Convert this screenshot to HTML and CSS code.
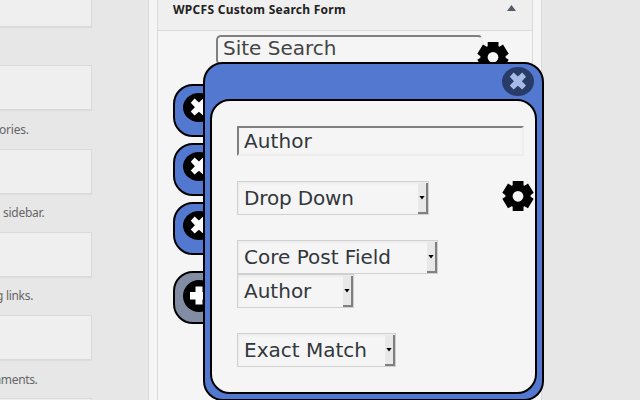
FILE: index.html
```
<!DOCTYPE html>
<html lang="en">
<head>
<meta charset="utf-8">
<title>Widgets</title>
<link rel="stylesheet" href="styles.css">
</head>
<body>
<svg width="0" height="0" class="defs">
  <symbol id="gear" viewBox="0 0 32 30">
    <path fill-rule="evenodd" d="M10.7 0H21.5V4.2L22.5 4.8L26 2.5L31.7 11.7L28.6 14.2V15.8L31.7 17.7L26 27.2L22.5 25.2L21.5 25.8V30H10.7V25.8L9.7 25.2L6 27.2L0.3 17.7L3.4 15.8V14.2L0.3 11.7L6 2.5L9.7 4.8L10.7 4.2ZM16 9.9A5.4 5.4 0 1 0 16 20.7A5.4 5.4 0 1 0 16 9.9Z"/>
  </symbol>
  <symbol id="cross" viewBox="0 0 32 29">
    <path d="M11.6 5.6L15.9 9.6L20.2 5.6L24 9.8L19.9 14.2L24 18.6L20.2 22.6L15.9 18.8L11.6 22.6L7.8 18.6L11.9 14.2L7.8 9.8Z"/>
  </symbol>
  <symbol id="plus" viewBox="0 0 32 32">
    <path d="M12.5 6.5H19.5V12H26V19.5H19.5V24.5H12.5V19.5H7V12H12.5Z"/>
  </symbol>
</svg>
<div class="page">
  <div class="available">
    <div class="box"></div><p></p>
    <div class="box"></div><p class="d1">ories.</p>
    <div class="box"></div><p class="d2">sidebar.</p>
    <div class="box"></div><p class="d3">g links.</p>
    <div class="box"></div><p class="d4">mments.</p>
    <div class="box"></div>
  </div>
  <div class="sidebar">
    <div class="widget">
      <div class="head"><h3>WPCFS Custom Search Form</h3><i class="up"></i></div>
      <div class="body">
        <div class="site">
          <div class="title">Site Search</div>
          <svg class="gear"><use href="#gear"/></svg>
        </div>
        <div class="item"><svg class="round"><use href="#cross"/></svg></div>
        <div class="item"><svg class="round"><use href="#cross"/></svg></div>
        <div class="item"><svg class="round"><use href="#cross"/></svg></div>
        <div class="item add"><svg class="round"><use href="#plus"/></svg></div>
      </div>
    </div>
  </div>
</div>
<div class="dialog">
  <div class="bar"><svg class="round close"><use href="#cross"/></svg></div>
  <div class="form">
    <div class="input">Author</div>
    <div class="row">
      <div class="select drop"><span>Drop Down</span><b></b></div>
      <svg class="gear"><use href="#gear"/></svg>
    </div>
    <div class="select core"><span>Core Post Field</span><b></b></div>
    <div class="select field"><span>Author</span><b></b></div>
    <div class="select match"><span>Exact Match</span><b></b></div>
  </div>
</div>
</body>
</html>
```
FILE: styles.css
```
* { box-sizing: border-box; }
body {
  margin: 0;
  width: 640px;
  height: 400px;
  overflow: hidden;
  position: relative;
  background: #e7e7e7;
  font-family: "DejaVu Sans", sans-serif;
}
.defs { position: absolute; }
.page { display: flex; height: 400px; overflow: hidden; }

.available { width: 148px; flex: none; }
.box {
  width: 92px;
  height: 45px;
  background: #efefef;
  border: 1px solid #dadada;
  border-left: 0;
  box-shadow: 0 1px 1px rgba(0, 0, 0, .04);
}
.box:first-child { height: 27px; border-top: 0; }
.available p {
  margin: 0;
  height: 38px;
  padding-top: 10px;
  font: 12px/18px "Noto Sans", sans-serif;
  color: #666;
  white-space: nowrap;
}
.available .d1 { height: 39px; padding-top: 11px; letter-spacing: -.2px; text-indent: -1px; }
.available .d2 { letter-spacing: -.25px; text-indent: 3px; }
.available .d3 { letter-spacing: -.3px; text-indent: -4px; }
.available .d4 { letter-spacing: -.35px; text-indent: -10px; padding-top: 11px; }

.sidebar {
  width: 394px;
  height: 400px;
  padding: 0 8px;
  background: #f5f5f5;
  border: solid #dadada;
  border-width: 0 1px;
}
.widget { height: 400px; border: solid #dadada; border-width: 0 1px; }
.head {
  display: flex;
  justify-content: space-between;
  height: 31px;
  padding: 0 16px 0 15px;
  background: #efefef;
  border-bottom: 1px solid #dadada;
}
.head h3 {
  margin: 0;
  font: bold 12px/19px "Noto Sans", sans-serif;
  letter-spacing: .27px;
  color: #222;
  white-space: nowrap;
}
.up {
  margin-top: 5px;
  width: 9px;
  height: 6px;
  background: #555b66;
  clip-path: polygon(50% 0, 100% 100%, 0 100%);
}
.body { padding: 4px 0 0 15px; }
.site { display: flex; height: 49px; padding-left: 43px; }
.title {
  width: 267px;
  height: 30px;
  padding-left: 5px;
  border: 2px solid #808080;
  border-right-color: #eee;
  border-bottom-color: #eee;
  border-radius: 5px;
  font-size: 20px;
  line-height: 23px;
  color: #444;
}
.gear { width: 32px; height: 30px; flex: none; }
.site .gear { margin: 7px 0 0 -6px; }
.item {
  width: 120px;
  height: 53px;
  margin-bottom: 6px;
  padding: 7px 8px;
  background: #5278cf;
  border: 2px solid #000;
  border-radius: 20px;
}
.item.add { margin-top: 16px; background: #828ca3; }
.round {
  display: block;
  width: 32px;
  height: 29px;
  border-radius: 50%;
  background: #000;
  fill: #fff;
}
.add .round { height: 32px; }

.dialog {
  position: absolute;
  left: 203px;
  top: 62px;
  width: 341px;
  height: 339px;
  padding: 0 5px;
  background: #5278cf;
  border: 2px solid #000;
  border-radius: 20px;
}
.bar { display: flex; justify-content: flex-end; height: 35px; padding: 3px 3px 0; }
.round.close { background: #293c67; fill: #a8bbe7; }
.form {
  display: flex;
  flex-direction: column;
  align-items: flex-start;
  height: 295px;
  padding: 25px 0 0 25px;
  background: #f5f5f5;
  border: 2px solid #000;
  border-radius: 20px;
  font-size: 20px;
  color: #32373c;
}
.input {
  width: 287px;
  height: 30px;
  padding-left: 5px;
  border: 2px solid;
  border-color: #808080 #eee #eee #808080;
  line-height: 27px;
  letter-spacing: .1px;
}
.row {
  display: flex;
  width: 297px;
  height: 34px;
  margin: 25px 0;
  justify-content: space-between;
}
.select {
  display: flex;
  justify-content: space-between;
  flex: none;
  height: 34px;
  padding: 1px 0 0 6px;
  border: 1px solid #d0d0d0;
  box-shadow: inset 1px 2px 2px rgba(0, 0, 0, .04);
  line-height: 30px;
  white-space: nowrap;
}
.drop span { letter-spacing: -.15px; }
.row .select { line-height: 31px; }
.select b {
  display: flex;
  align-items: center;
  width: 10px;
  height: 31px;
  background: #e8e8e8;
  border: solid #808080;
  border-width: 0 2px 2px 0;
}
.select b::after {
  content: "";
  margin-left: 1px;
  width: 6px;
  height: 4px;
  flex: none;
  background: #000;
  clip-path: polygon(0 0, 100% 0, 50% 100%);
}
.drop { width: 192px; }
.core { width: 201px; }
.field { width: 117px; }
.match { width: 159px; margin-top: 25px; }
```
